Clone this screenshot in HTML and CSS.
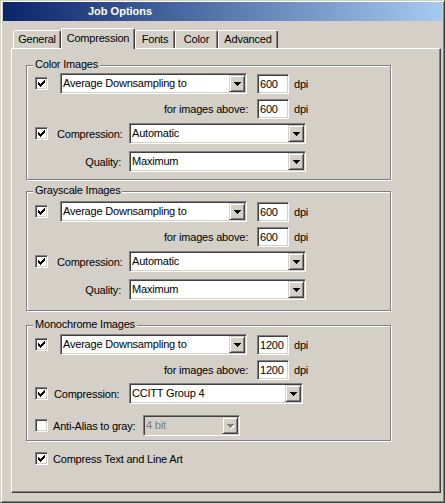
FILE: index.html
```html
<!DOCTYPE html>
<html lang="en">
<head>
<meta charset="utf-8">
<title>Job Options</title>
<link rel="stylesheet" href="styles.css">
</head>
<body>
<div class="window">
  <div class="titlebar">Job Options</div>
  <div class="client">
    <div class="tabs">
      <div class="tab tab-general">General</div>
      <div class="tab tab-active">Compression</div>
      <div class="tab tab-fonts">Fonts</div>
      <div class="tab tab-color">Color</div>
      <div class="tab tab-advanced">Advanced</div>
    </div>
    <div class="panel">
      <section class="group group-color">
        <div class="legend">Color Images</div>
        <div class="row">
          <span class="check"><svg width="7" height="7" viewBox="0 0 7 7"><path d="M6 0h1v1h-1zM5 1h2v1h-2zM0 2h1v1h-1zM4 2h3v1h-3zM0 3h2v1h-2zM3 3h3v1h-3zM0 4h5v1h-5zM1 5h3v1h-3zM2 6h1v1h-1z"/></svg></span>
          <div class="combo combo-method"><span class="combo-value">Average Downsampling to</span><span class="combo-btn"><svg width="7" height="4" viewBox="0 0 7 4"><path d="M0 0h7v1h-7zM1 1h5v1h-5zM2 2h3v1h-3zM3 3h1v1h-1z"/></svg></span></div>
          <div class="field">600</div>
          <span class="unit">dpi</span>
        </div>
        <div class="row gap-4">
          <span class="label-above">for images above:</span>
          <div class="field">600</div>
          <span class="unit">dpi</span>
        </div>
        <div class="row gap-4">
          <span class="check"><svg width="7" height="7" viewBox="0 0 7 7"><path d="M6 0h1v1h-1zM5 1h2v1h-2zM0 2h1v1h-1zM4 2h3v1h-3zM0 3h2v1h-2zM3 3h3v1h-3zM0 4h5v1h-5zM1 5h3v1h-3zM2 6h1v1h-1z"/></svg></span>
          <span class="label-comp">Compression:</span>
          <div class="combo combo-wide"><span class="combo-value">Automatic</span><span class="combo-btn"><svg width="7" height="4" viewBox="0 0 7 4"><path d="M0 0h7v1h-7zM1 1h5v1h-5zM2 2h3v1h-3zM3 3h1v1h-1z"/></svg></span></div>
        </div>
        <div class="row gap-7">
          <span class="label-quality">Quality:</span>
          <div class="combo combo-wide"><span class="combo-value">Maximum</span><span class="combo-btn"><svg width="7" height="4" viewBox="0 0 7 4"><path d="M0 0h7v1h-7zM1 1h5v1h-5zM2 2h3v1h-3zM3 3h1v1h-1z"/></svg></span></div>
        </div>
      </section>

      <section class="group group-gray">
        <div class="legend">Grayscale Images</div>
        <div class="row">
          <span class="check"><svg width="7" height="7" viewBox="0 0 7 7"><path d="M6 0h1v1h-1zM5 1h2v1h-2zM0 2h1v1h-1zM4 2h3v1h-3zM0 3h2v1h-2zM3 3h3v1h-3zM0 4h5v1h-5zM1 5h3v1h-3zM2 6h1v1h-1z"/></svg></span>
          <div class="combo combo-method"><span class="combo-value">Average Downsampling to</span><span class="combo-btn"><svg width="7" height="4" viewBox="0 0 7 4"><path d="M0 0h7v1h-7zM1 1h5v1h-5zM2 2h3v1h-3zM3 3h1v1h-1z"/></svg></span></div>
          <div class="field">600</div>
          <span class="unit">dpi</span>
        </div>
        <div class="row gap-4">
          <span class="label-above">for images above:</span>
          <div class="field">600</div>
          <span class="unit">dpi</span>
        </div>
        <div class="row gap-4">
          <span class="check"><svg width="7" height="7" viewBox="0 0 7 7"><path d="M6 0h1v1h-1zM5 1h2v1h-2zM0 2h1v1h-1zM4 2h3v1h-3zM0 3h2v1h-2zM3 3h3v1h-3zM0 4h5v1h-5zM1 5h3v1h-3zM2 6h1v1h-1z"/></svg></span>
          <span class="label-comp">Compression:</span>
          <div class="combo combo-wide"><span class="combo-value">Automatic</span><span class="combo-btn"><svg width="7" height="4" viewBox="0 0 7 4"><path d="M0 0h7v1h-7zM1 1h5v1h-5zM2 2h3v1h-3zM3 3h1v1h-1z"/></svg></span></div>
        </div>
        <div class="row gap-7">
          <span class="label-quality">Quality:</span>
          <div class="combo combo-wide"><span class="combo-value">Maximum</span><span class="combo-btn"><svg width="7" height="4" viewBox="0 0 7 4"><path d="M0 0h7v1h-7zM1 1h5v1h-5zM2 2h3v1h-3zM3 3h1v1h-1z"/></svg></span></div>
        </div>
      </section>

      <section class="group group-mono">
        <div class="legend">Monochrome Images</div>
        <div class="row">
          <span class="check"><svg width="7" height="7" viewBox="0 0 7 7"><path d="M6 0h1v1h-1zM5 1h2v1h-2zM0 2h1v1h-1zM4 2h3v1h-3zM0 3h2v1h-2zM3 3h3v1h-3zM0 4h5v1h-5zM1 5h3v1h-3zM2 6h1v1h-1z"/></svg></span>
          <div class="combo combo-method"><span class="combo-value">Average Downsampling to</span><span class="combo-btn"><svg width="7" height="4" viewBox="0 0 7 4"><path d="M0 0h7v1h-7zM1 1h5v1h-5zM2 2h3v1h-3zM3 3h1v1h-1z"/></svg></span></div>
          <div class="field">1200</div>
          <span class="unit">dpi</span>
        </div>
        <div class="row gap-4">
          <span class="label-above">for images above:</span>
          <div class="field">1200</div>
          <span class="unit">dpi</span>
        </div>
        <div class="row gap-3">
          <span class="check"><svg width="7" height="7" viewBox="0 0 7 7"><path d="M6 0h1v1h-1zM5 1h2v1h-2zM0 2h1v1h-1zM4 2h3v1h-3zM0 3h2v1h-2zM3 3h3v1h-3zM0 4h5v1h-5zM1 5h3v1h-3zM2 6h1v1h-1z"/></svg></span>
          <span class="label-comp label-comp-mono">Compression:</span>
          <div class="combo combo-mono"><span class="combo-value">CCITT Group 4</span><span class="combo-btn"><svg width="7" height="4" viewBox="0 0 7 4"><path d="M0 0h7v1h-7zM1 1h5v1h-5zM2 2h3v1h-3zM3 3h1v1h-1z"/></svg></span></div>
        </div>
        <div class="row gap-11">
          <span class="check"></span>
          <span class="label-anti">Anti-Alias to gray:</span>
          <div class="combo combo-disabled"><span class="combo-value">4 bit</span><span class="combo-btn"><svg width="8" height="5" viewBox="0 0 8 5"><path class="arrow-shadow" d="M1 1h7v1h-7zM2 2h5v1h-5zM3 3h3v1h-3zM4 4h1v1h-1z"/><path class="arrow-grey" d="M0 0h7v1h-7zM1 1h5v1h-5zM2 2h3v1h-3zM3 3h1v1h-1z"/></svg></span></div>
        </div>
      </section>

      <div class="row-compress">
        <span class="check"><svg width="7" height="7" viewBox="0 0 7 7"><path d="M6 0h1v1h-1zM5 1h2v1h-2zM0 2h1v1h-1zM4 2h3v1h-3zM0 3h2v1h-2zM3 3h3v1h-3zM0 4h5v1h-5zM1 5h3v1h-3zM2 6h1v1h-1z"/></svg></span>
        <span class="label-compress">Compress Text and Line Art</span>
      </div>
    </div>
  </div>
</div>
</body>
</html>
```

FILE: styles.css
```css
* {
  box-sizing: border-box;
}

html,
body {
  margin: 0;
  padding: 0;
}

body {
  width: 445px;
  height: 503px;
  overflow: hidden;
  background: #d4d0c8;
  font-family: "Liberation Sans", Arial, sans-serif;
  font-size: 11px;
  letter-spacing: -0.2px;
  color: #000;
}

.window {
  width: 445px;
  height: 503px;
  display: flex;
  flex-direction: column;
  background: #d4d0c8;
  border: 1px solid;
  border-color: #d4d0c8 #404040 #404040 #d4d0c8;
  box-shadow: inset 1px 1px 0 #fff, inset -1px -1px 0 #808080;
  padding: 1px 2px 2px 2px;
}

.titlebar {
  height: 19px;
  line-height: 19px;
  padding-left: 85px;
  background: linear-gradient(to right, #0a246a, #a6caf0);
  color: #fff;
  font-weight: bold;
  letter-spacing: 0;
  white-space: nowrap;
}

.client {
  flex: 1;
  padding: 7px 0 0 8px;
}

/* Tabs */
.tabs {
  display: flex;
  align-items: flex-end;
  height: 20px;
  margin-left: 2px;
  position: relative;
  z-index: 2;
}

.tab {
  height: 18px;
  line-height: 16px;
  text-align: center;
  white-space: nowrap;
  background: #d4d0c8;
  border-top: 1px solid #fff;
  border-left: 1px solid #fff;
  border-right: 1px solid #404040;
  box-shadow: inset -1px 0 0 #808080;
  border-top-left-radius: 2px;
  border-top-right-radius: 2px;
}

.tab-general { width: 48px; }
.tab-fonts { width: 40px; }
.tab-color { width: 43px; }
.tab-advanced { width: 60px; }

.tab-active {
  width: 74px;
  height: 21px;
  line-height: 18px;
  margin-bottom: -1px;
  position: relative;
  z-index: 3;
}

/* Panel */
.panel {
  width: 430px;
  height: 445px;
  display: flex;
  flex-direction: column;
  border: 1px solid;
  border-color: #fff #404040 #404040 #fff;
  box-shadow: inset -1px -1px 0 #808080;
  padding: 16px 0 0 14px;
}

/* Group boxes */
.group {
  position: relative;
  width: 365px;
  display: flex;
  flex-direction: column;
  border: 1px solid #808080;
  box-shadow: inset 1px 1px 0 #fff, 1px 1px 0 #fff;
  padding-left: 8px;
}

.group-color {
  height: 115px;
  padding-top: 7px;
}

.group-gray {
  height: 120px;
  margin-top: 11px;
  padding-top: 9px;
}

.group-mono {
  height: 116px;
  margin-top: 14px;
  padding-top: 8px;
}

.legend {
  position: absolute;
  left: 6px;
  top: -8px;
  padding: 0 2px;
  line-height: 13px;
  background: #d4d0c8;
  white-space: nowrap;
}

.row {
  display: flex;
  align-items: center;
  height: 21px;
  white-space: nowrap;
}

.gap-3 { margin-top: 3px; }
.gap-4 { margin-top: 4px; }
.gap-7 { margin-top: 7px; }
.gap-11 { margin-top: 11px; }

/* Checkbox */
.check {
  width: 13px;
  height: 13px;
  flex: none;
  display: flex;
  align-items: flex-start;
  padding: 2px 0 0 2px;
  background: #fff;
  border: 1px solid;
  border-color: #808080 #fff #fff #808080;
  box-shadow: inset 1px 1px 0 #404040, inset -1px -1px 0 #d4d0c8;
}

.check svg {
  display: block;
  fill: #000;
  shape-rendering: crispEdges;
}

/* Combo boxes */
.combo {
  height: 21px;
  flex: none;
  display: flex;
  padding: 1px;
  background: #fff;
  border: 1px solid;
  border-color: #808080 #fff #fff #808080;
  box-shadow: inset 1px 1px 0 #404040, inset -1px -1px 0 #d4d0c8;
}

.combo-value {
  flex: 1;
  padding-left: 1px;
  line-height: 17px;
  overflow: hidden;
}

.combo-btn {
  width: 16px;
  height: 17px;
  flex: none;
  display: flex;
  align-items: center;
  justify-content: center;
  background: #d4d0c8;
  border: 1px solid;
  border-color: #d4d0c8 #404040 #404040 #d4d0c8;
  box-shadow: inset 1px 1px 0 #fff, inset -1px -1px 0 #808080;
}

.combo-btn svg {
  display: block;
  fill: #000;
  shape-rendering: crispEdges;
}

.combo-method {
  width: 187px;
  margin-left: 12px;
}

.combo-wide {
  width: 177px;
}

.combo-mono {
  width: 174px;
}

.combo-disabled {
  width: 97px;
  background: #d4d0c8;
  color: #808080;
}

.combo-disabled .combo-btn svg {
  width: 8px;
  height: 5px;
  margin: 1px 0 0 1px;
}

.arrow-shadow { fill: #fff; }
.arrow-grey { fill: #808080; }

/* Text fields */
.field {
  width: 32px;
  height: 20px;
  flex: none;
  margin-left: 10px;
  padding-left: 2px;
  line-height: 18px;
  background: #fff;
  border: 1px solid;
  border-color: #808080 #fff #fff #808080;
  box-shadow: inset 1px 1px 0 #404040, inset -1px -1px 0 #d4d0c8;
}

.unit {
  margin-left: 5px;
}

.label-above {
  width: 213px;
  text-align: right;
}

.label-above + .field {
  margin-left: 9px;
}

.label-comp {
  width: 72px;
  margin-left: 9px;
  flex: none;
}

.label-comp-mono {
  width: 75px;
  margin-left: 6px;
}

.label-quality {
  width: 86px;
  margin-right: 8px;
  text-align: right;
  flex: none;
}

.label-anti {
  width: 90px;
  margin-left: 5px;
  flex: none;
}

.row-compress {
  display: flex;
  align-items: center;
  height: 13px;
  margin-top: 11px;
  padding-left: 9px;
  white-space: nowrap;
}

.label-compress {
  margin-left: 5px;
}
```
